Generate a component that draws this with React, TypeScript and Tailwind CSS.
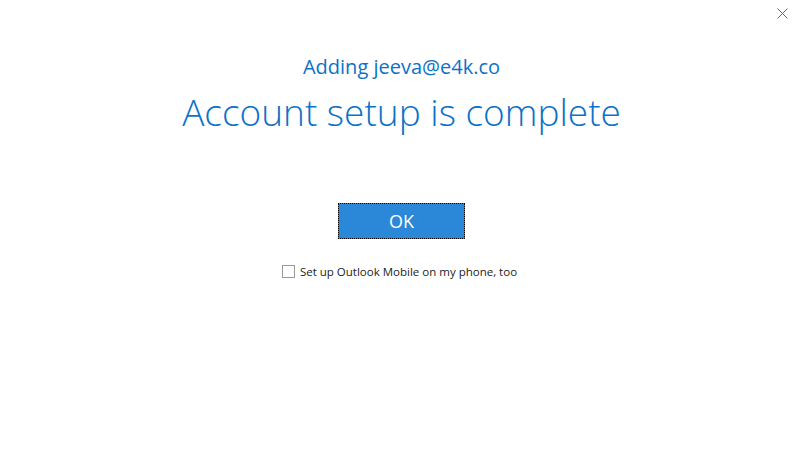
export default function App() {
  return (
    <div className="relative h-[469px] w-[805px] bg-white font-['Open_Sans',sans-serif]">
      <button className="absolute right-[17px] top-[7px] flex h-[12px] w-[12px] items-center justify-center">
        <svg width="11" height="11" viewBox="0 0 11 11">
          <path d="M0.5 0.5 L10.5 10.5 M10.5 0.5 L0.5 10.5" stroke="#666" strokeWidth="1" />
        </svg>
      </button>
      <div className="flex flex-col items-center pr-[2px] pt-[53px]">
        <p className="text-[20px] leading-[28px] text-[#0b72c7]">Adding jeeva@e4k.co</p>
        <h1 className="mt-[6px] text-[37px] font-light leading-[50px] text-[#0b72c7]">Account setup is complete</h1>
        <button className="mt-[66px] h-[36px] w-[127px] border border-dotted border-black bg-[#2b88d8] text-[18px] text-white">
          OK
        </button>
        <label className="mr-[4px] mt-[24px] flex items-center gap-[5px] text-[11.5px] text-[#222]">
          <span className="h-[13px] w-[13px] border border-[#999] bg-white" />
          Set up Outlook Mobile on my phone, too
        </label>
      </div>
    </div>
  )
}
